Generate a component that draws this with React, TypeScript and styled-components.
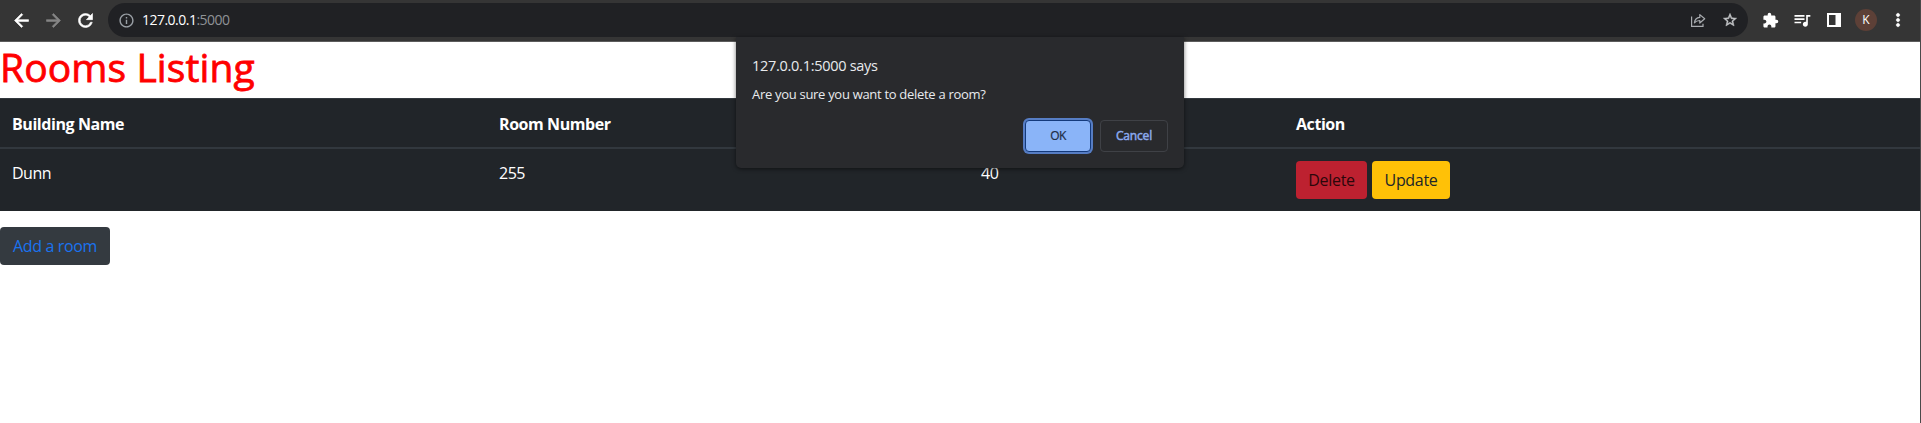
import React from "react";
import styled, { createGlobalStyle } from "styled-components";
import { MdArrowBack, MdArrowForward, MdRefresh, MdInfoOutline, MdStarOutline, MdExtension, MdQueueMusic, MdMoreVert } from "react-icons/md";

const GlobalStyle = createGlobalStyle`
  *, *::before, *::after { box-sizing: border-box; }
  body {
    margin: 0;
    background: #fff;
    color: #212529;
    font: 400 16px/24px "Open Sans", "Noto Sans", sans-serif;
    overflow: hidden;
  }
`;

const Window = styled.div`
  height: 423px;
  border-right: 1px solid #4a4a4a;
`;

const Toolbar = styled.header`
  display: flex;
  align-items: center;
  height: 42px;
  padding: 0 6px 1px 5px;
  background: #353535;
  border-bottom: 1px solid #5c5c5c;
  color: #fff;
`;

const IconSlot = styled.span<{ $color?: string; $bold?: boolean }>`
  display: flex;
  flex: none;
  align-items: center;
  justify-content: center;
  width: 32px;
  height: 32px;
  color: ${(p) => p.$color ?? "#fff"};

  path:not([fill="none"]) { stroke-width: ${(p) => (p.$bold ? "0.7px" : "inherit")}; }
  path[fill="none"] { stroke: none; }
`;

const AddressBar = styled.div`
  display: flex;
  flex: 1;
  align-items: center;
  height: 34px;
  margin: 0 6px 0 7px;
  padding: 0 2px;
  border-radius: 17px;
  background: #202124;
`;

const Address = styled.span`
  flex: 1;
  font-size: 14px;
  line-height: 20px;
  letter-spacing: -0.52px;
  color: #8f9296;

  b { font-weight: 400; color: #fff; }
`;

const Avatar = styled.span`
  width: 22px;
  height: 22px;
  border-radius: 50%;
  background: #5d4037;
  font-size: 12px;
  line-height: 22px;
  text-align: center;
`;

const Title = styled.h1`
  margin: 0;
  padding-top: 1px;
  height: 56px;
  font-size: 39px;
  font-weight: 400;
  line-height: 48px;
  letter-spacing: 0.1px;
  color: #f00;
  -webkit-text-stroke: 0.8px #f00;
`;

const Table = styled.table`
  width: 100%;
  table-layout: fixed;
  border-collapse: separate;
  border-spacing: 0;
  background: #212529;
  color: #fff;
  text-align: left;
`;

const HeadCell = styled.th<{ $width?: number }>`
  width: ${(p) => (p.$width ? `${p.$width}px` : "auto")};
  height: 51px;
  padding: 1px 12px 0;
  border-top: 1px solid #32383e;
  border-bottom: 2px solid #32383e;
  font-weight: 700;
  letter-spacing: -0.43px;
`;

const Cell = styled.td`
  height: 62px;
  padding: 12px;
  vertical-align: top;
  letter-spacing: -0.5px;
`;

const Actions = styled.div`
  display: flex;
  gap: 5px;
`;

const Button = styled.button<{ $bg: string; $color: string; $width: number }>`
  width: ${(p) => p.$width}px;
  height: 38px;
  padding: 0;
  border: 0;
  border-radius: 4px;
  background: ${(p) => p.$bg};
  color: ${(p) => p.$color};
  font: inherit;
  letter-spacing: -0.33px;
`;

const Footer = styled.div`
  display: flex;
  padding-top: 16px;
`;

const Dialog = styled.div`
  position: absolute;
  top: 37px;
  left: 736px;
  display: flex;
  flex-direction: column;
  width: 448px;
  height: 131px;
  padding: 18px 16px 16px;
  border-radius: 0 0 5px 5px;
  background: #292a2d;
  box-shadow: 0 1px 4px rgba(0, 0, 0, 0.55);
  color: #e8eaed;
`;

const DialogTitle = styled.div`
  font-size: 14.5px;
  line-height: 22px;
  letter-spacing: -0.28px;
`;

const DialogText = styled.div`
  margin-top: 7px;
  font-size: 13px;
  line-height: 20px;
  letter-spacing: -0.3px;
`;

const DialogActions = styled.div`
  display: flex;
  justify-content: flex-end;
  gap: 9px;
  margin-top: auto;
`;

const DialogButton = styled.button<{ $primary?: boolean }>`
  width: ${(p) => (p.$primary ? 66 : 68)}px;
  height: 32px;
  padding: 0 0 1px;
  border: 1px solid ${(p) => (p.$primary ? "#143a7c" : "#3f4146")};
  border-radius: 4px;
  background: ${(p) => (p.$primary ? "#8ab4f8" : "transparent")};
  box-shadow: ${(p) => (p.$primary ? "0 0 0 2px #567dc4" : "none")};
  color: ${(p) => (p.$primary ? "#202d45" : "#8ba9ee")};
  font: 400 12px "Open Sans", sans-serif;
  -webkit-text-stroke: ${(p) => (p.$primary ? "0.2px" : "0.5px")} currentColor;
  letter-spacing: ${(p) => (p.$primary ? "-0.5px" : "-0.15px")};
`;

const ShareIcon = () => (
  <svg width="16" height="16" viewBox="0 0 16 16" fill="none" stroke="currentColor" strokeWidth="1.2">
    <path d="M1.6 4.500v9.900h11.400v-2.600" />
    <path d="M4.400 10.900c.4-3.700 2.200-5.300 5.400-5.500V2.600l4.900 4.200-4.900 4.200V8.500c-2.400 0-4 .6-5.400 2.400z" strokeLinejoin="round" />
  </svg>
);

const SidePanelIcon = () => (
  <svg width="14" height="14" viewBox="0 0 14 14">
    <path fill="currentColor" fillRule="evenodd" d="M0 0h14v14H0zM2 2v10h6.500V2z" />
  </svg>
);

export default function App() {
  return (
    <Window>
      <GlobalStyle />
      <Toolbar>
        <IconSlot $bold><MdArrowBack size={21} /></IconSlot>
        <IconSlot $bold $color="#858585"><MdArrowForward size={21} /></IconSlot>
        <IconSlot $bold><MdRefresh size={21} /></IconSlot>
        <AddressBar>
          <IconSlot $color="#9aa0a6"><MdInfoOutline size={17} strokeWidth={0} /></IconSlot>
          <Address><b>127.0.0.1</b>:5000</Address>
          <IconSlot $color="#a9acb0"><ShareIcon /></IconSlot>
          <IconSlot $bold $color="#c4c6c9"><MdStarOutline size={16} /></IconSlot>
        </AddressBar>
        <IconSlot><MdExtension size={17} /></IconSlot>
        <IconSlot><MdQueueMusic size={20} /></IconSlot>
        <IconSlot><SidePanelIcon /></IconSlot>
        <IconSlot><Avatar>K</Avatar></IconSlot>
        <IconSlot $bold><MdMoreVert size={20} /></IconSlot>
      </Toolbar>
      <Title>Rooms Listing</Title>
      <Table>
        <thead>
          <tr>
            <HeadCell $width={487}>Building Name</HeadCell>
            <HeadCell $width={482}>Room Number</HeadCell>
            <HeadCell $width={315} />
            <HeadCell>Action</HeadCell>
          </tr>
        </thead>
        <tbody>
          <tr>
            <Cell>Dunn</Cell>
            <Cell>255</Cell>
            <Cell>40</Cell>
            <Cell>
              <Actions>
                <Button $bg="#bd2130" $color="#2b070b" $width={71}>Delete</Button>
                <Button $bg="#ffc107" $color="#212529" $width={78}>Update</Button>
              </Actions>
            </Cell>
          </tr>
        </tbody>
      </Table>
      <Footer>
        <Button $bg="#343a40" $color="#1a73f0" $width={110}>Add a room</Button>
      </Footer>
      <Dialog>
        <DialogTitle>127.0.0.1:5000 says</DialogTitle>
        <DialogText>Are you sure you want to delete a room?</DialogText>
        <DialogActions>
          <DialogButton $primary>OK</DialogButton>
          <DialogButton>Cancel</DialogButton>
        </DialogActions>
      </Dialog>
    </Window>
  );
}
